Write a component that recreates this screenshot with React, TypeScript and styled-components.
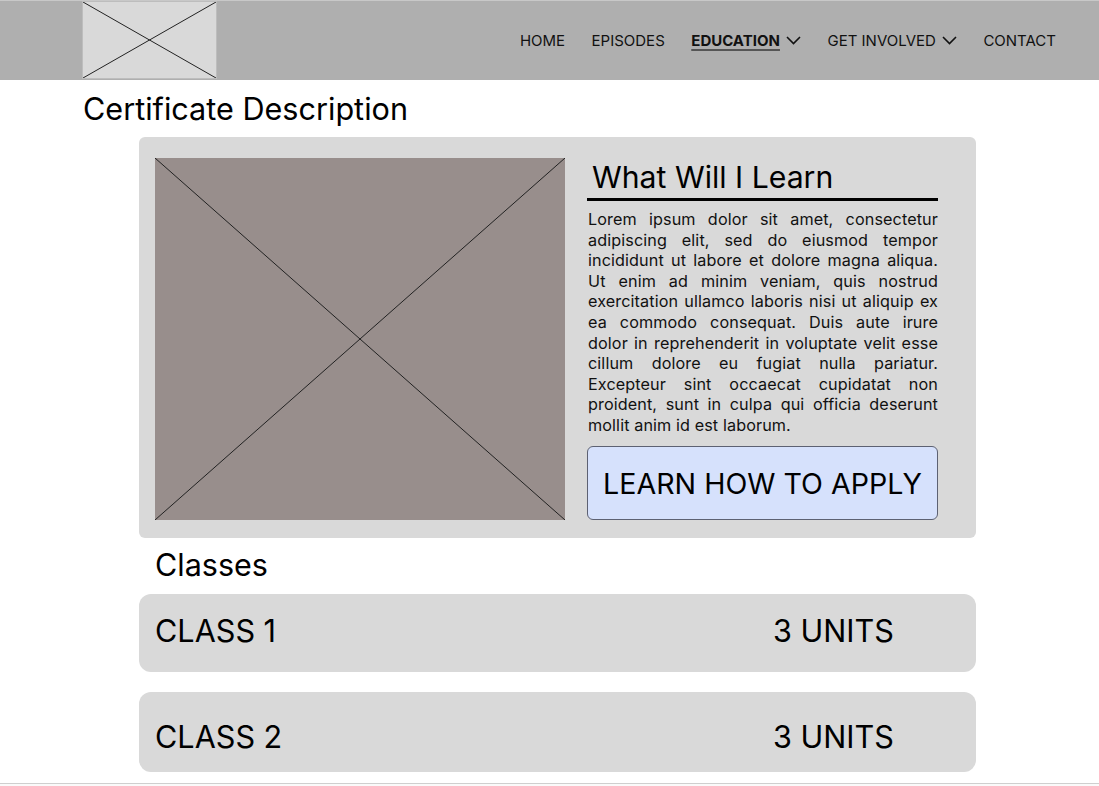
import React from 'react'
import styled, { createGlobalStyle } from 'styled-components'

const GlobalStyle = createGlobalStyle`
    html, body {
        margin: 0;
        padding: 0;
        background: #ffffff;
        font-family: Inter, "Noto Sans", sans-serif;
        color: #000;
    }
    * {
        box-sizing: border-box;
    }
`

const Page = styled.div`
    width: 1099px;
    min-height: 786px;
    display: flex;
    flex-direction: column;
`

const Header = styled.header`
    height: 80px;
    background: #afafaf;
    border-top: 1px solid #c8c8c8;
    display: flex;
    align-items: stretch;
    justify-content: space-between;
    padding: 0 43px 0 82px;
`

const Logo = styled.div`
    width: 135px;
    height: 78px;
    background: #d9d9d9;
    border: 1px solid #bdbdbd;
`

const Nav = styled.nav`
    display: flex;
    align-items: center;
    gap: 26.5px;
    padding-bottom: 1px;
`

const NavItem = styled.a<{ $active?: boolean }>`
    display: flex;
    align-items: center;
    gap: 6px;
    font-size: 15px;
    font-weight: ${(p) => (p.$active ? 700 : 400)};
    color: #111;
    text-decoration: none;
    span {
        text-decoration: ${(p) => (p.$active ? 'underline' : 'none')};
        text-decoration-thickness: 2px;
        text-underline-offset: 3px;
        text-decoration-color: #555;
    }
`

const Main = styled.main`
    display: flex;
    flex-direction: column;
    padding-left: 139px;
`

const PageTitle = styled.h1`
    margin: 10px 0 0 -56px;
    font-size: 30.6px;
    font-weight: 400;
    line-height: 37px;
`

const Card = styled.section`
    width: 837px;
    margin-top: 10px;
    background: #d9d9d9;
    border-radius: 6px;
    padding: 21px 38px 18px 16px;
    display: flex;
    gap: 22px;
`

const Placeholder = styled.div<{ $w: number; $h: number; $bg: string }>`
    width: ${(p) => p.$w}px;
    height: ${(p) => p.$h}px;
    flex-shrink: 0;
    background: ${(p) => p.$bg};
    svg {
        display: block;
        width: 100%;
        height: 100%;
    }
`

const Side = styled.div`
    flex: 1;
    display: flex;
    flex-direction: column;
`

const SideTitle = styled.h2`
    margin: 0;
    padding: 1px 0 2px 5px;
    font-size: 30.2px;
    font-weight: 400;
    line-height: 37px;
    border-bottom: 3px solid #000;
`

const Body = styled.p`
    margin: 8px 0 0 1px;
    font-size: 16.2px;
    letter-spacing: 0.1px;
    line-height: 20.6px;
    text-align: justify;
    color: #111;
`

const ApplyButton = styled.button`
    margin-top: auto;
    height: 74px;
    width: 100%;
    background: #d6e1fc;
    border: 1px solid #5d6172;
    border-radius: 6px;
    font-family: Inter, "Noto Sans", sans-serif;
    font-size: 28.6px;
    font-weight: 400;
    color: #000;
    cursor: pointer;
`

const SectionTitle = styled.h2`
    margin: 8px 0 0 16px;
    font-size: 30.5px;
    font-weight: 400;
    line-height: 38px;
`

const ClassList = styled.div`
    margin-top: 10px;
    display: flex;
    flex-direction: column;
    gap: 20px;
`

const ClassRow = styled.div<{ $h: number; $shift: number }>`
    width: 837px;
    height: ${(p) => p.$h}px;
    background: #d9d9d9;
    border-radius: 12px;
    padding-left: 16px;
    padding-top: ${(p) => Math.max(p.$shift, 0)}px;
    padding-bottom: ${(p) => Math.max(-p.$shift, 0)}px;
    display: grid;
    grid-template-columns: 618px auto;
    align-items: center;
    font-size: 30.6px;
    line-height: 36px;
`

const Footer = styled.footer`
    margin-top: 11px;
    border-top: 1px solid #cfcfcf;
    height: 3px;
    background: #fafafa;
`

const Chevron = () => (
    <svg width="15" height="9" viewBox="0 0 15 9" fill="none">
        <path d="M1 1l6.5 6.5L14 1" stroke="#111" strokeWidth="1.6" />
    </svg>
)

const Cross = () => (
    <svg viewBox="0 0 100 100" preserveAspectRatio="none">
        <line x1="0" y1="0" x2="100" y2="100" stroke="#222" strokeWidth="1" vectorEffect="non-scaling-stroke" />
        <line x1="100" y1="0" x2="0" y2="100" stroke="#222" strokeWidth="1" vectorEffect="non-scaling-stroke" />
    </svg>
)

const lorem =
    'Lorem ipsum dolor sit amet, consectetur adipiscing elit, sed do eiusmod tempor incididunt ut labore et dolore magna aliqua. Ut enim ad minim veniam, quis nostrud exercitation ullamco laboris nisi ut aliquip ex ea commodo consequat. Duis aute irure dolor in reprehenderit in voluptate velit esse cillum dolore eu fugiat nulla pariatur. Excepteur sint occaecat cupidatat non proident, sunt in culpa qui officia deserunt mollit anim id est laborum.'

const classes = [
    { name: 'CLASS 1', units: '3 UNITS', h: 78, shift: -4 },
    { name: 'CLASS 2', units: '3 UNITS', h: 80, shift: 10 },
]

export default function App() {
    return (
        <Page>
            <GlobalStyle />
            <Header>
                <Logo>
                    <Placeholder $w={133} $h={76} $bg="#d9d9d9">
                        <Cross />
                    </Placeholder>
                </Logo>
                <Nav>
                    <NavItem><span>HOME</span></NavItem>
                    <NavItem><span>EPISODES</span></NavItem>
                    <NavItem $active><span>EDUCATION</span><Chevron /></NavItem>
                    <NavItem><span>GET INVOLVED</span><Chevron /></NavItem>
                    <NavItem><span>CONTACT</span></NavItem>
                </Nav>
            </Header>
            <Main>
                <PageTitle>Certificate Description</PageTitle>
                <Card>
                    <Placeholder $w={410} $h={362} $bg="#988e8c">
                        <Cross />
                    </Placeholder>
                    <Side>
                        <SideTitle>What Will I Learn</SideTitle>
                        <Body>{lorem}</Body>
                        <ApplyButton>LEARN HOW TO APPLY</ApplyButton>
                    </Side>
                </Card>
                <SectionTitle>Classes</SectionTitle>
                <ClassList>
                    {classes.map((c) => (
                        <ClassRow key={c.name} $h={c.h} $shift={c.shift}>
                            <span>{c.name}</span>
                            <span>{c.units}</span>
                        </ClassRow>
                    ))}
                </ClassList>
            </Main>
            <Footer />
        </Page>
    )
}
